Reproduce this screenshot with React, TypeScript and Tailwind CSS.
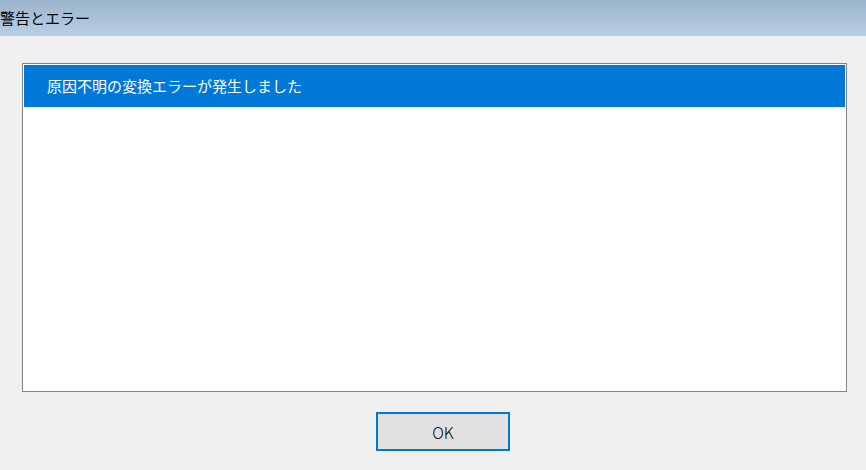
export default function App() {
  return (
    <div
      className="flex h-[470px] w-[866px] flex-col bg-[#f0f0f0] text-black"
      style={{ fontFamily: '"Noto Sans CJK JP", "Noto Sans", sans-serif' }}
    >
      {/* タイトルバー */}
      <div className="flex h-[36px] items-center bg-gradient-to-b from-[#9cb3cd] to-[#bacfe7] text-[15px] leading-none">
        <span className="-mt-[2px]">警告とエラー</span>
      </div>

      <div className="flex flex-col pt-[27px]">
        {/* メッセージ一覧 */}
        <div className="ml-[22px] mr-[19px] h-[329px] border border-[#828282] bg-white p-px">
          <div className="flex h-[42px] items-center bg-[#0078d7] pl-[23px] text-[15px] text-white">
            原因不明の変換エラーが発生しました
          </div>
        </div>

        <button className="ml-[376px] mt-[20px] flex h-[39px] w-[134px] items-center justify-center border-2 border-[#0078d7] bg-[#e1e1e1] text-[16px] font-light">
          OK
        </button>
      </div>
    </div>
  );
}
